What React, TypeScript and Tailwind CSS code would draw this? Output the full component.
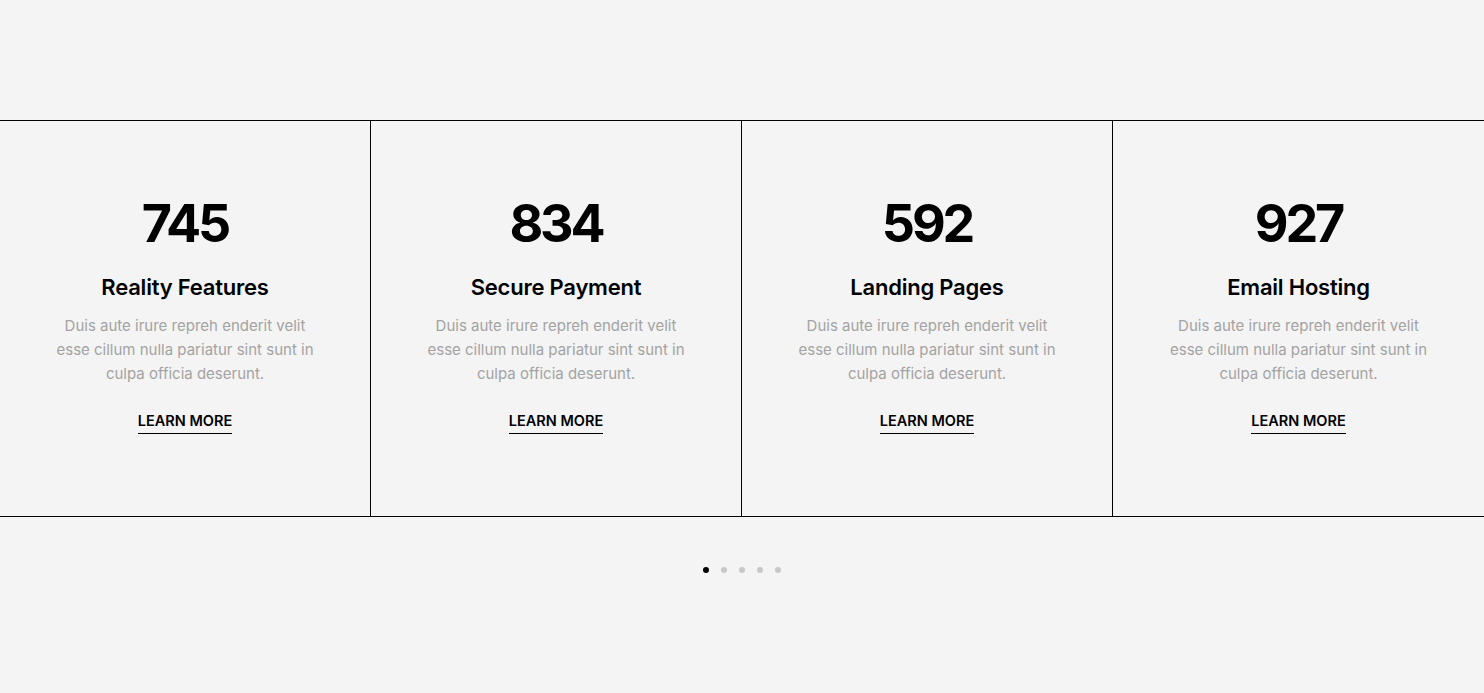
import React from 'react';

const stats = [
  { value: '745', title: 'Reality Features' },
  { value: '834', title: 'Secure Payment' },
  { value: '592', title: 'Landing Pages' },
  { value: '927', title: 'Email Hosting' },
];

const StatCard = ({ value, title, last }: { value: string; title: string; last: boolean }) => (
  <div className={`flex flex-col items-center pt-[72px] h-[395px] ${last ? '' : 'border-r border-black'}`}>
    <div className="text-[52px] leading-[62px] font-bold tracking-[-0.06em] text-black">{value}</div>
    <h3 className="mt-[18px] text-[22px] leading-[28px] font-semibold tracking-[-0.01em] text-black">{title}</h3>
    <p className="mt-[13px] w-[262px] text-center text-[15px] leading-[24px] text-[#a3a3a3]">
      Duis aute irure repreh enderit velit esse cillum nulla pariatur sint sunt in culpa officia deserunt.
    </p>
    <a href="#" className="mt-[25px] text-[14.5px] leading-[20px] font-semibold text-black border-b border-black pb-[2px]">
      LEARN MORE
    </a>
  </div>
);

export default function App() {
  return (
    <div className="min-h-[693px] bg-[#f4f4f4] pt-[120px] font-['Inter',sans-serif]">
      <div className="grid grid-cols-4 border-y border-black">
        {stats.map((s, i) => (
          <StatCard key={s.value} value={s.value} title={s.title} last={i === stats.length - 1} />
        ))}
      </div>
      <div className="flex justify-center gap-[12px] mt-[50px]">
        {[0, 1, 2, 3, 4].map((i) => (
          <span key={i} className={`w-[6px] h-[6px] rounded-full ${i === 0 ? 'bg-black' : 'bg-[#c8c8c8]'}`} />
        ))}
      </div>
    </div>
  );
}
